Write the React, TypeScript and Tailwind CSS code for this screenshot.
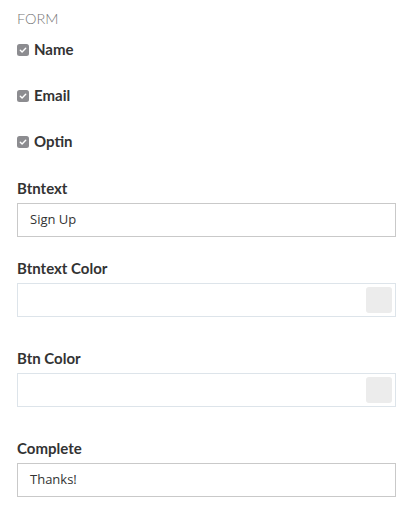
import React from 'react';

const font = { fontFamily: 'Lato, "Open Sans", sans-serif' };

const CheckRow = ({ label, first }: { label: string; first?: boolean }) => (
  <label className={`flex h-5 items-center gap-[5px] ${first ? 'mt-[10px]' : 'mt-[26px]'}`}>
    <span className="mt-[2px] flex h-3 w-3 items-center justify-center rounded-[2.5px] bg-[#8c8c90]">
      <svg viewBox="0 0 12 12" className="h-3 w-3">
        <path d="M3.3 6.2 L5.1 8 L8.7 4.3" fill="none" stroke="#fff" strokeWidth="1.4" strokeLinecap="round" strokeLinejoin="round" />
      </svg>
    </span>
    <span className="text-[15px] font-bold leading-5 text-[#333]">{label}</span>
  </label>
);

const TextField = ({ label, value, className }: { label: string; value: string; className: string }) => (
  <div className={className}>
    <div className="mb-[5px] text-[15px] font-bold leading-5 text-[#333]">{label}</div>
    <div className="flex h-[34px] items-center border border-[#c9c9c9] bg-white pl-3 font-['Open_Sans',sans-serif] text-[13px] text-[#333]">
      {value}
    </div>
  </div>
);

const ColorField = ({ label, className }: { label: string; className: string }) => (
  <div className={className}>
    <div className="mb-[5px] text-[15px] font-bold leading-5 text-[#333]">{label}</div>
    <div className="flex h-[34px] items-center justify-end border border-[#dde4ea] bg-white pr-[3px]">
      <div className="h-[26px] w-[26px] rounded-[3px] bg-[#ececec]" />
    </div>
  </div>
);

export default function App() {
  return (
    <div className="h-[512px] w-[410px] bg-white pl-[17px] pr-[14px] pt-[9px]" style={font}>
      <div className="text-[14.5px] font-light uppercase leading-5 text-[#777]">Form</div>
      <CheckRow label="Name" first />
      <CheckRow label="Email" />
      <CheckRow label="Optin" />
      <TextField label="Btntext" value="Sign Up" className="mt-[27px]" />
      <ColorField label="Btntext Color" className="mt-[21px]" />
      <ColorField label="Btn Color" className="mt-[31px]" />
      <TextField label="Complete" value="Thanks!" className="mt-[31px]" />
    </div>
  );
}
